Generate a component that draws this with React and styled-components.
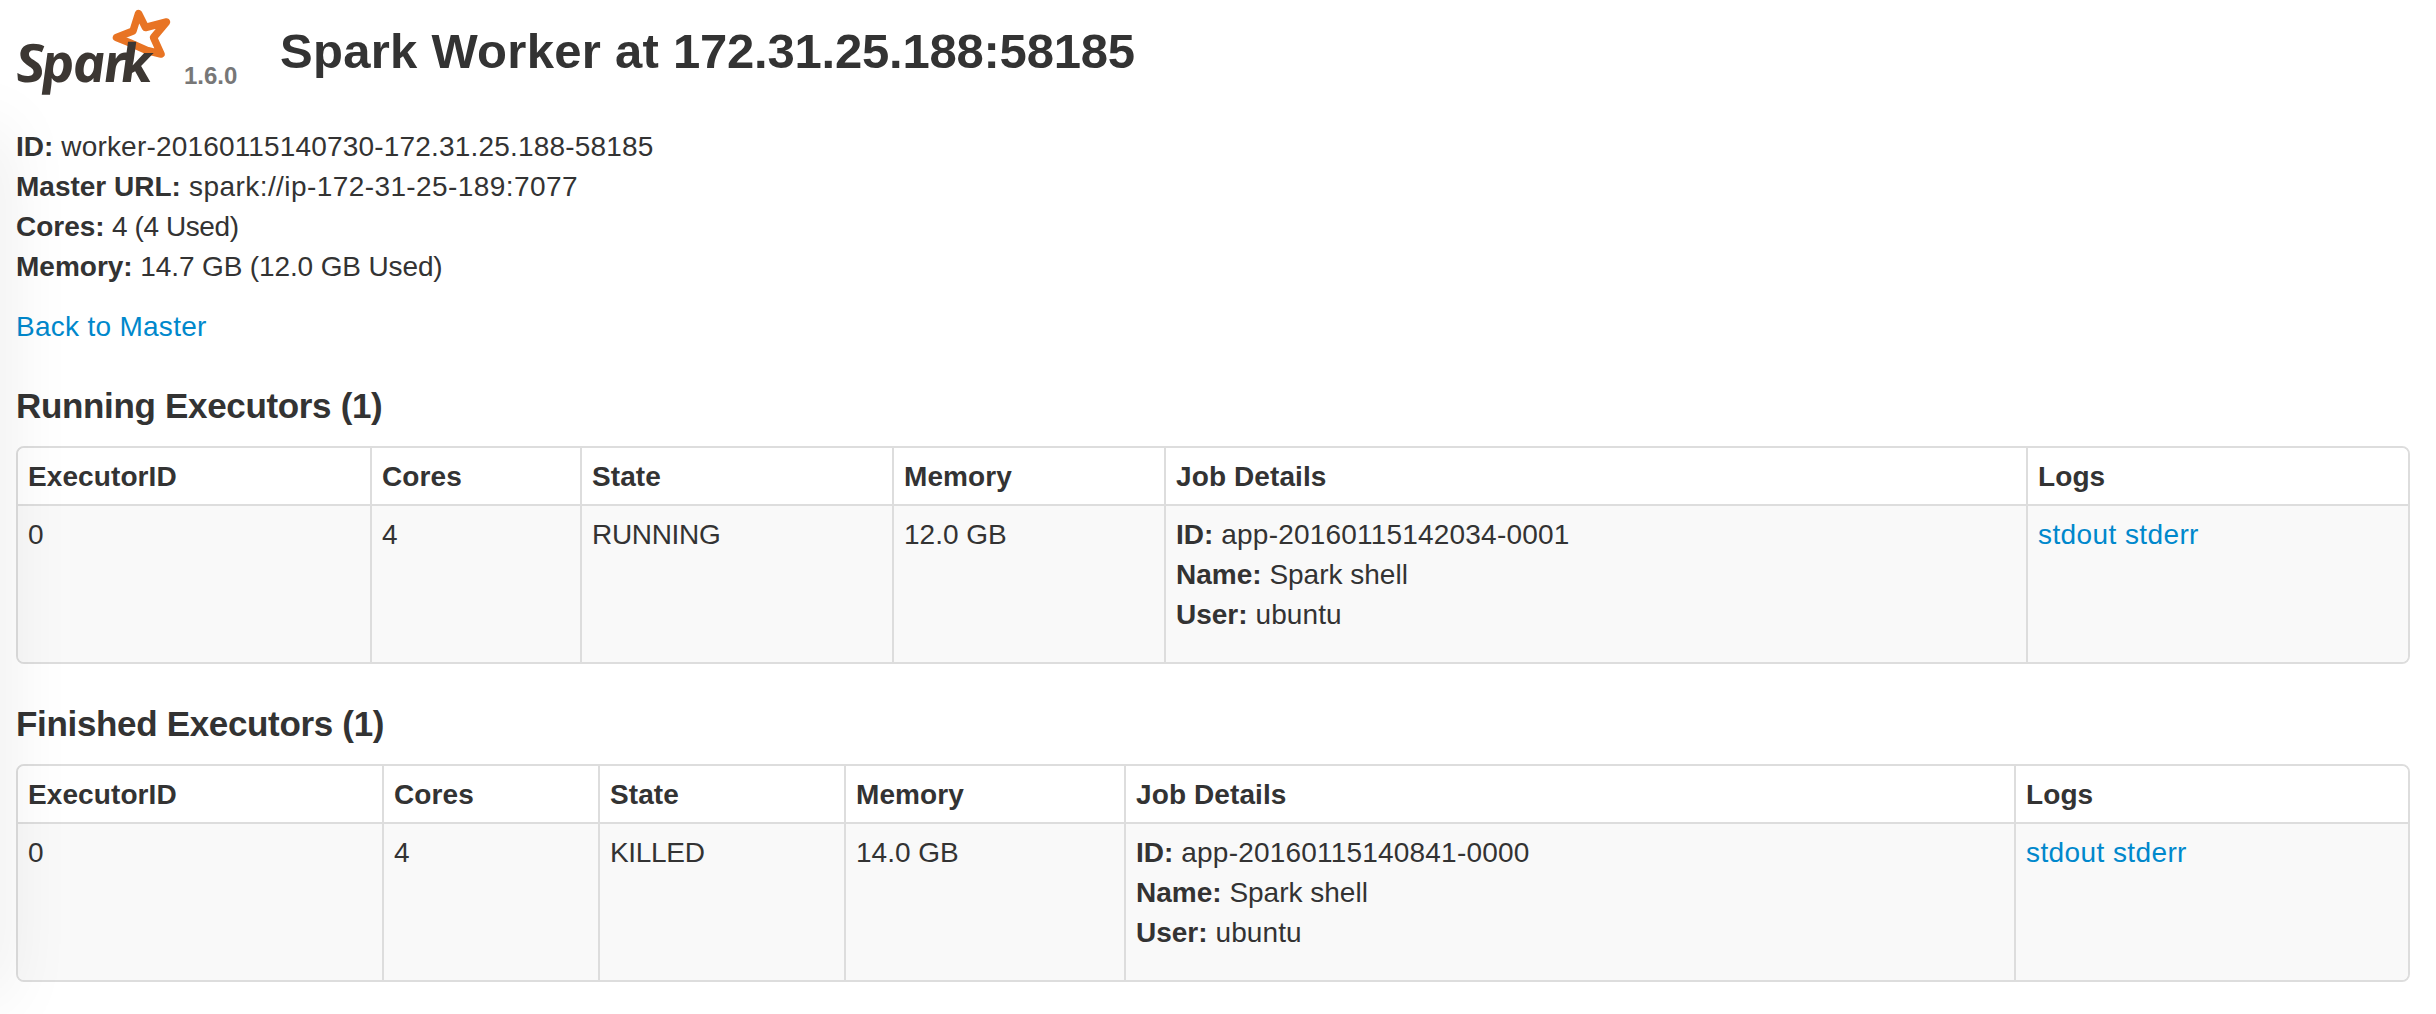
import React from "react";
import styled, { createGlobalStyle } from "styled-components";

const GlobalStyle = createGlobalStyle`
  body {
    margin: 0;
    background: #fff;
    color: #333;
    font-family: "Liberation Sans", "Helvetica Neue", Helvetica, Arial, sans-serif;
    font-size: 28px;
    line-height: 40px;
  }
`;

const Page = styled.div`
  position: relative;
  box-sizing: border-box;
  width: 2436px;
  height: 1014px;
  padding: 0 26px 0 16px;
  overflow: hidden;
`;

const EdgeShade = styled.div`
  position: absolute;
  left: -40px;
  top: 130px;
  width: 40px;
  height: 868px;
  box-shadow: 0 0 70px rgba(0, 0, 0, 0.1);
  pointer-events: none;
`;

const Header = styled.header`
  display: flex;
  height: 116px;
`;

const Logo = styled.svg`
  display: block;
  width: 156px;
  height: 108px;
  overflow: visible;
`;

const Version = styled.span`
  width: 96px;
  padding: 56px 0 0 12px;
  color: #777;
  font-size: 24px;
  font-weight: bold;
`;

const Title = styled.h3`
  margin: 31px 0 0;
  font-size: 49px;
  line-height: 40px;
  white-space: nowrap;
`;

const Tracked = styled.span`
  letter-spacing: ${(p) => p.$track}px;
`;

const Facts = styled.ul`
  margin: 11px 0 20px;
  padding: 0;
  list-style: none;
`;

const Line = styled.li`
  height: 40px;
  white-space: nowrap;
  letter-spacing: ${(p) => p.$track || 0}px;

  b {
    letter-spacing: 0;
  }
`;

const BackRow = styled.div`
  height: 40px;
`;

const Link = styled.a`
  color: #08c;
  text-decoration: none;
  letter-spacing: ${(p) => p.$track || 0}px;
`;

const Section = styled.section`
  margin: ${(p) => p.$gap}px 0 0;
`;

const SectionTitle = styled.h4`
  margin: 0 0 20px;
  font-size: 35px;
  line-height: 40px;
  letter-spacing: -0.33px;
`;

const Table = styled.div`
  display: grid;
  grid-template-columns: ${(p) => p.$columns};
  border: 2px solid #ddd;
  border-radius: 8px;
  overflow: hidden;
`;

const Cell = styled.div`
  padding: 9px 10px 7px;
  height: 140px;
  background: #f9f9f9;
  border-left: ${(p) => (p.$first ? 0 : 2)}px solid #ddd;
  border-top: 2px solid #ddd;
  letter-spacing: ${(p) => p.$track || 0}px;
`;

const HeadCell = styled(Cell)`
  height: 40px;
  background: #fff;
  border-top: 0;
  font-weight: bold;
`;

const Details = styled.ul`
  margin: 0;
  padding: 0;
  list-style: none;
`;

function SparkLogo() {
  return (
    <Logo viewBox="16 0 156 108" role="img" aria-label="Spark">
      <path
        d="M138.5 13.5 L145.5 27.5 L166.5 22 L153.5 37.5 L161 54 L147 50.5 L129 42.5 L116.5 37.5 L133 31 Z"
        fill="none" stroke="#e87424" strokeWidth="7.5" strokeLinejoin="round"
      />
      <g transform="translate(17 82) skewX(5) scale(1.06 1)">
        <text x="0 24 53.5 82.5 98.5" y="0" fontFamily="Open Sans, sans-serif" fontSize="53" fontWeight="bold"
          fontStyle="italic" fill="#3c3733">Spark</text>
      </g>
    </Logo>
  );
}

const HEADINGS = ["ExecutorID", "Cores", "State", "Memory", "Job Details", "Logs"];

function Executors({ title, columns, row, gap }) {
  return (
    <Section $gap={gap}>
      <SectionTitle>{title}</SectionTitle>
      <Table $columns={columns}>
        {HEADINGS.map((h, i) => <HeadCell key={h} $first={i === 0} $track={0.1}>{h}</HeadCell>)}
        <Cell $first>{row.id}</Cell>
        <Cell>{row.cores}</Cell>
        <Cell $track={-0.33}>{row.state}</Cell>
        <Cell>{row.memory}</Cell>
        <Cell>
          <Details>
            <Line $track={0.2}><b>ID:</b> {row.app}</Line>
            <Line><b>Name:</b> {row.name}</Line>
            <Line $track={0.1}><b>User:</b> {row.user}</Line>
          </Details>
        </Cell>
        <Cell $track={0.4}><Link $track={0.4}>stdout</Link> <Link $track={0.4}>stderr</Link></Cell>
      </Table>
    </Section>
  );
}

export default function App() {
  return (
    <Page>
      <GlobalStyle />
      <Header>
        <SparkLogo />
        <Version>1.6.0</Version>
        <Title>
          <Tracked $track={0.28}>Spark Worker at </Tracked>
          <Tracked $track={-0.22}>172.31.25.188:58185</Tracked>
        </Title>
      </Header>
      <Facts>
        <Line $track={0.18}><b>ID:</b> worker-20160115140730-172.31.25.188-58185</Line>
        <Line $track={0.42}><b>Master URL:</b> spark://ip-172-31-25-189:7077</Line>
        <Line $track={-0.42}><b>Cores:</b> 4 (4 Used)</Line>
        <Line $track={-0.13}><b>Memory:</b> 14.7 GB (12.0 GB Used)</Line>
      </Facts>
      <BackRow><Link $track={0.28}>Back to Master</Link></BackRow>
      <Executors
        gap={39}
        title="Running Executors (1)"
        columns="352px 210px 312px 272px 862px 1fr"
        row={{ id: 0, cores: 4, state: "RUNNING", memory: "12.0 GB", app: "app-20160115142034-0001", name: "Spark shell", user: "ubuntu" }}
      />
      <Executors
        gap={40}
        title="Finished Executors (1)"
        columns="364px 216px 246px 280px 890px 1fr"
        row={{ id: 0, cores: 4, state: "KILLED", memory: "14.0 GB", app: "app-20160115140841-0000", name: "Spark shell", user: "ubuntu" }}
      />
      <EdgeShade />
    </Page>
  );
}
